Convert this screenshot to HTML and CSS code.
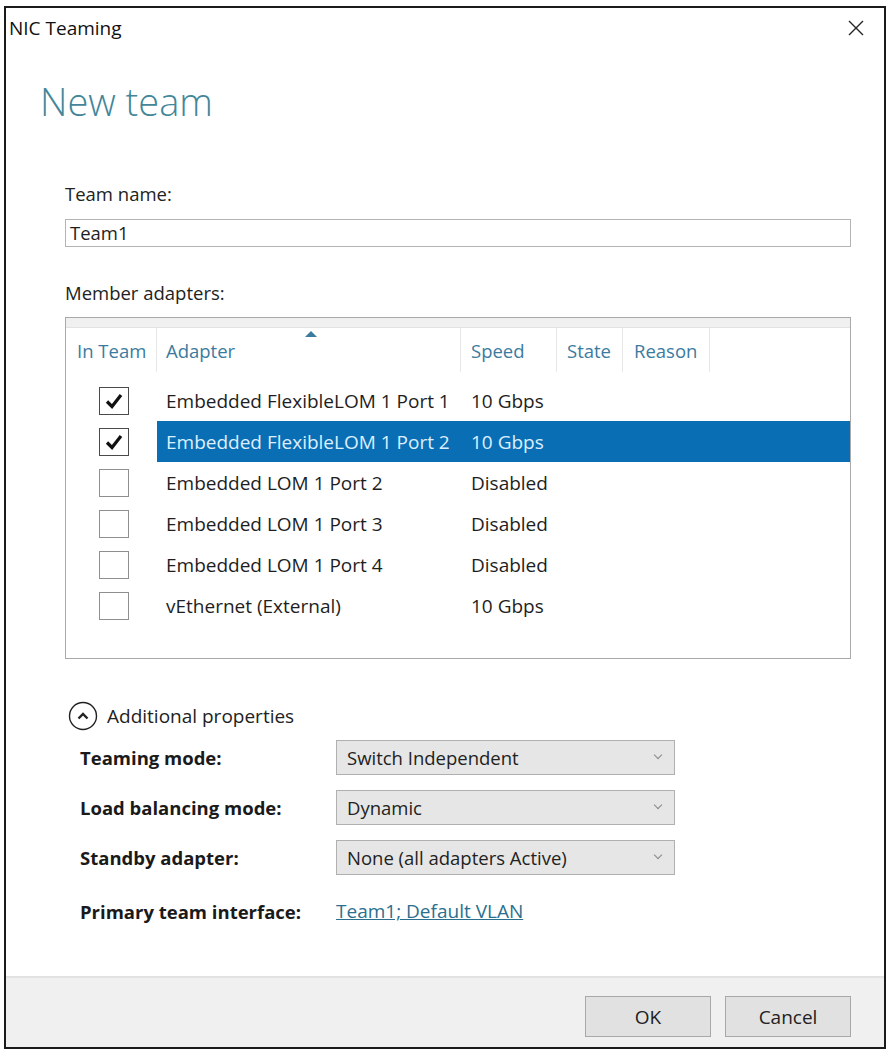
FILE: index.html
```html
<!DOCTYPE html>
<html lang="en">
<head>
    <meta charset="UTF-8">
    <title>NIC Teaming</title>
    <link rel="stylesheet" href="styles.css">
</head>
<body>
    <div class="window">
        <div class="titlebar">
            <span class="title">NIC Teaming</span>
            <svg class="close" width="16" height="16" viewBox="0 0 16 16">
                <path d="M1 1 L15 15 M15 1 L1 15" stroke="#222" stroke-width="1.4" fill="none"/>
            </svg>
        </div>

        <div class="content">
            <h1 class="heading">New team</h1>

            <div class="form">
                <label class="label">Team name:</label>
                <div class="textbox">Team1</div>

                <label class="label members-label">Member adapters:</label>
                <div class="adapters">
                    <div class="adapters-top"></div>
                    <div class="row header">
                        <div class="cell col-team">In Team</div>
                        <div class="cell col-adapter">Adapter<span class="sort"></span></div>
                        <div class="cell col-speed">Speed</div>
                        <div class="cell col-state">State</div>
                        <div class="cell col-reason">Reason</div>
                    </div>

                    <div class="row">
                        <div class="cell col-team">
                            <span class="check checked">
                                <svg width="20" height="18" viewBox="0 0 20 18"><path d="M3 9.5 L8 14.5 L17 3" stroke="#111" stroke-width="3.2" fill="none"/></svg>
                            </span>
                        </div>
                        <div class="cell col-adapter">Embedded FlexibleLOM 1 Port 1</div>
                        <div class="cell col-speed">10 Gbps</div>
                    </div>
                    <div class="row selected">
                        <div class="cell col-team">
                            <span class="check checked">
                                <svg width="20" height="18" viewBox="0 0 20 18"><path d="M3 9.5 L8 14.5 L17 3" stroke="#111" stroke-width="3.2" fill="none"/></svg>
                            </span>
                        </div>
                        <div class="cell col-adapter">Embedded FlexibleLOM 1 Port 2</div>
                        <div class="cell col-speed">10 Gbps</div>
                    </div>
                    <div class="row">
                        <div class="cell col-team"><span class="check"></span></div>
                        <div class="cell col-adapter">Embedded LOM 1 Port 2</div>
                        <div class="cell col-speed">Disabled</div>
                    </div>
                    <div class="row">
                        <div class="cell col-team"><span class="check"></span></div>
                        <div class="cell col-adapter">Embedded LOM 1 Port 3</div>
                        <div class="cell col-speed">Disabled</div>
                    </div>
                    <div class="row">
                        <div class="cell col-team"><span class="check"></span></div>
                        <div class="cell col-adapter">Embedded LOM 1 Port 4</div>
                        <div class="cell col-speed">Disabled</div>
                    </div>
                    <div class="row">
                        <div class="cell col-team"><span class="check"></span></div>
                        <div class="cell col-adapter">vEthernet (External)</div>
                        <div class="cell col-speed">10 Gbps</div>
                    </div>
                </div>

                <div class="expander">
                    <svg class="expander-icon" width="30" height="30" viewBox="0 0 30 30">
                        <circle cx="15" cy="15" r="13.5" stroke="#222" stroke-width="1.4" fill="none"/>
                        <path d="M10.5 17.5 L15 13 L19.5 17.5" stroke="#222" stroke-width="2.4" fill="none"/>
                    </svg>
                    <span>Additional properties</span>
                </div>

                <div class="props">
                    <div class="prop-label">Teaming mode:</div>
                    <div class="dropdown">Switch Independent<span class="chevron"></span></div>

                    <div class="prop-label">Load balancing mode:</div>
                    <div class="dropdown">Dynamic<span class="chevron"></span></div>

                    <div class="prop-label">Standby adapter:</div>
                    <div class="dropdown">None (all adapters Active)<span class="chevron"></span></div>

                    <div class="prop-label">Primary team interface:</div>
                    <a class="link" href="#">Team1; Default VLAN</a>
                </div>
            </div>
        </div>

        <div class="footer">
            <button class="btn">OK</button>
            <button class="btn">Cancel</button>
        </div>
    </div>
</body>
</html>
```

FILE: styles.css
```css
* {
    margin: 0;
    padding: 0;
    box-sizing: border-box;
}

body {
    background-color: white;
    font-family: "Open Sans", "Noto Sans", sans-serif;
    color: #1e1e1e;
    font-size: 19px;
}

.window {
    margin: 6px 0 0 4px;
    width: 882px;
    height: 1043px;
    border: 2px solid #1b1b1b;
    display: flex;
    flex-direction: column;
    background-color: white;
}

.titlebar {
    height: 42px;
    display: flex;
    align-items: center;
    justify-content: space-between;
    padding: 0 20px 2px 3px;
}

.title {
    font-size: 19px;
    color: #111;
}

.content {
    padding: 0 33px 0 34px;
}

.heading {
    font-size: 38px;
    font-weight: 300;
    color: #438699;
    margin-top: 27px;
    line-height: 48px;
}

.form {
    padding-left: 25px;
    margin-top: 57px;
}

.label {
    display: block;
    font-size: 18.5px;
    line-height: 24px;
    color: #222;
}

.textbox {
    margin-top: 13px;
    height: 28px;
    border: 1px solid #b4b4b4;
    padding: 0 4px;
    font-size: 18.5px;
    line-height: 26px;
}

.members-label {
    margin-top: 34px;
}

.adapters {
    margin-top: 12px;
    height: 342px;
    border: 1px solid #a9a9a9;
}

.adapters-top {
    height: 10px;
    background-color: #f0f0f0;
    border-bottom: 1px solid #e2e2e2;
}

.row {
    display: flex;
    height: 41px;
    align-items: center;
}

.row.header {
    height: 44px;
    margin-bottom: 8px;
    align-items: stretch;
    color: #3b7ba0;
    font-size: 18.5px;
}

.row.header .cell {
    border-right: 1px solid #e6e6e6;
    display: flex;
    align-items: center;
    position: relative;
}

.cell {
    white-space: nowrap;
}

.col-team {
    width: 91px;
    padding-left: 11px;
}

.col-adapter {
    width: 304px;
    padding-left: 10px;
}

.col-speed {
    width: 96px;
    padding-left: 10px;
}

.col-state {
    width: 66px;
    padding-left: 10px;
}

.col-reason {
    width: 87px;
    padding-left: 11px;
}

.row .col-adapter {
    padding-left: 9px;
}

.sort {
    position: absolute;
    left: 148px;
    top: 3px;
    width: 0;
    height: 0;
    border-left: 6px solid transparent;
    border-right: 6px solid transparent;
    border-bottom: 6px solid #3b7ba0;
}

.row .col-team {
    display: flex;
    align-items: center;
    height: 100%;
}

.check {
    display: inline-flex;
    align-items: center;
    justify-content: center;
    width: 30px;
    height: 28px;
    margin-left: 22px;
    border: 1px solid #8f8f8f;
}

.check.checked {
    border-color: #4a4a4a;
}

.row.header .col-team {
    padding-left: 11px;
}

.row.selected .col-adapter,
.row.selected .col-speed {
    background-color: #0a6eb4;
    color: #dcefff;
    height: 100%;
    display: flex;
    align-items: center;
}

.row.selected .col-speed {
    flex: 1;
}

.expander {
    display: flex;
    align-items: center;
    gap: 9px;
    margin-top: 42px;
    margin-left: 3px;
    font-size: 19px;
    line-height: 30px;
    color: #222;
}

.props {
    display: grid;
    grid-template-columns: 256px 339px;
    row-gap: 15px;
    align-items: center;
    margin-top: 9px;
    margin-left: 15px;
}

.prop-label {
    font-weight: bold;
    font-size: 18.5px;
    color: #1a1a1a;
}

.dropdown {
    height: 35px;
    border: 1px solid #b0b0b0;
    background-color: #e6e6e6;
    padding: 0 10px;
    display: flex;
    align-items: center;
    justify-content: space-between;
    font-size: 18.5px;
    color: #222;
}

.chevron {
    width: 6px;
    height: 6px;
    border-right: 1.5px solid #888;
    border-bottom: 1.5px solid #888;
    transform: rotate(45deg);
    margin-right: 3px;
    margin-bottom: 6px;
}

.link {
    color: #2b6f8e;
    text-decoration: underline;
    font-size: 19px;
    line-height: 42px;
}

.footer {
    margin-top: auto;
    height: 71px;
    background-color: #f0f0f0;
    border-top: 2px solid #e2e2e2;
    display: flex;
    justify-content: flex-end;
    align-items: flex-start;
    gap: 14px;
    padding: 18px 33px 0 0;
}

.btn {
    width: 126px;
    height: 41px;
    border: 1px solid #a8a8a8;
    background-color: #e1e1e1;
    font-family: "Open Sans", "Noto Sans", sans-serif;
    font-size: 19px;
    color: #222;
}
```
